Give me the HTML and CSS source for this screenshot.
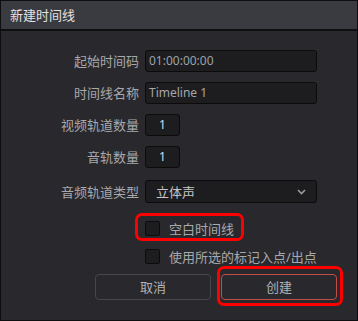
FILE: index.html
```html
<!DOCTYPE html>
<html lang="zh">
<head>
<meta charset="utf-8">
<title>新建时间线</title>
<link rel="stylesheet" href="styles.css">
</head>
<body>
<div class="dialog">
  <div class="titlebar">新建时间线</div>
  <div class="content">
    <div class="form">
      <label class="label">起始时间码</label>
      <div class="field wide">01:00:00:00</div>
      <label class="label">时间线名称</label>
      <div class="field wide name">Timeline 1</div>
      <label class="label">视频轨道数量</label>
      <div class="field num">1</div>
      <label class="label">音轨数量</label>
      <div class="field num">1</div>
      <label class="label select-label">音频轨道类型</label>
      <div class="field select">
        <span>立体声</span>
        <svg class="chev" width="9" height="6" viewBox="0 0 9 6"><path d="M1 1 L4.5 4.5 L8 1" fill="none" stroke="#9a9a9e" stroke-width="1.6"/></svg>
      </div>
    </div>
    <div class="checks">
      <div class="check-row">
        <span class="box"></span><span class="check-text">空白时间线</span>
        <span class="mark mark-check"></span>
      </div>
      <div class="check-row">
        <span class="box"></span><span class="check-text">使用所选的标记入点/出点</span>
      </div>
    </div>
    <div class="buttons">
      <div class="btn">取消</div>
      <div class="btn primary">创建<span class="mark mark-btn"></span></div>
    </div>
  </div>
</div>
</body>
</html>
```
FILE: styles.css
```css
* { box-sizing: border-box; }
html, body { margin: 0; padding: 0; background: #28282d; }
body {
  font-family: "Noto Sans", "Noto Sans CJK SC", sans-serif;
  font-size: 13px;
}
.dialog {
  width: 358px;
  height: 321px;
  border: 1px solid #0e0e10;
  background: #28282d;
  display: flex;
  flex-direction: column;
}
.titlebar {
  height: 30px;
  background: #3a3b40;
  border-bottom: 2px solid #0f0f11;
  color: #e2e2e4;
  padding-left: 9px;
  line-height: 28px;
  font-size: 13px;
}
.content {
  flex: 1;
  display: flex;
  flex-direction: column;
  padding-top: 19px;
}
.form {
  display: grid;
  grid-template-columns: 138px auto;
  column-gap: 6px;
  row-gap: 10px;
  justify-content: start;
}
.label {
  text-align: right;
  color: #a9a9ac;
  align-self: center;
  line-height: 16px;
}
.select-label { margin-top: 2px; }
.field {
  height: 22px;
  background: #1d1d1f;
  border: 1px solid #0b0b0c;
  border-radius: 3px;
  font-size: 12px;
  line-height: 20px;
}
.wide {
  width: 172px;
  padding-left: 3px;
  color: #9aa3ad;
}
.name { color: #a6a6aa; }
.num {
  width: 35px;
  text-align: center;
  color: #d2ddee;
}
.select {
  width: 172px;
  height: 23px;
  margin-top: 2px;
  display: flex;
  align-items: center;
  justify-content: space-between;
  padding: 0 10px 0 10px;
  color: #c6c6c8;
  font-size: 13px;
}
.chev { display: block; margin-top: 1px; }
.checks {
  display: flex;
  flex-direction: column;
  gap: 13px;
  padding-left: 144px;
  margin-top: 18px;
}
.check-row {
  position: relative;
  display: flex;
  align-items: center;
  height: 15px;
}
.box {
  width: 15px;
  height: 15px;
  background: #1d1d1f;
  border: 1px solid #0b0b0c;
  border-radius: 2px;
  flex: none;
}
.check-text {
  margin-left: 9px;
  color: #a9a9ac;
  white-space: nowrap;
}
.buttons {
  display: flex;
  justify-content: flex-end;
  gap: 10px;
  padding-right: 20px;
  margin-top: 10px;
}
.btn {
  position: relative;
  width: 116px;
  height: 26px;
  border: 1px solid #46474c;
  border-radius: 4px;
  color: #b2b2b5;
  text-align: center;
  line-height: 24px;
}
.primary { border-color: #c24e48; }
.mark {
  position: absolute;
  border: 3px solid #ff0000;
  border-radius: 7px;
  pointer-events: none;
}
.mark-check {
  left: -10px;
  top: -8px;
  width: 109px;
  height: 28px;
}
.mark-btn {
  left: -5px;
  top: -9px;
  width: 126px;
  height: 40px;
}
```
